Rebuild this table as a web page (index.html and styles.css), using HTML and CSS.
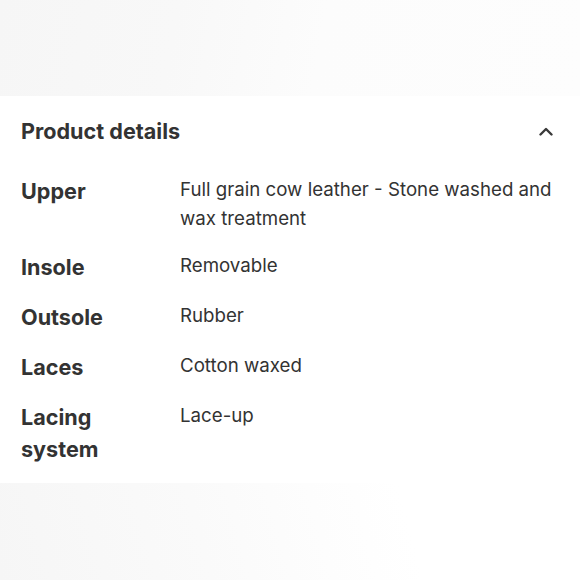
FILE: index.html
```html
<!DOCTYPE html>
<html lang="en">
<head>
<meta charset="utf-8">
<title>Product details</title>
<link rel="stylesheet" href="styles.css">
</head>
<body>
<div class="band band-top"></div>
<section class="card">
  <div class="header">
    <h2 class="title">Product details</h2>
    <svg class="chev" width="14" height="9" viewBox="0 0 14 9" aria-hidden="true"><path d="M1.5 7.5 L7 2 L12.5 7.5" fill="none" stroke="#3a3a3a" stroke-width="2.4" stroke-linecap="round" stroke-linejoin="round"/></svg>
  </div>
  <dl class="specs">
    <dt>Upper</dt><dd>Full grain cow leather - Stone washed and wax treatment</dd>
    <dt>Insole</dt><dd>Removable</dd>
    <dt>Outsole</dt><dd>Rubber</dd>
    <dt>Laces</dt><dd>Cotton waxed</dd>
    <dt>Lacing system</dt><dd>Lace-up</dd>
  </dl>
</section>
<div class="band band-bottom"></div>
</body>
</html>
```
FILE: styles.css
```css
html, body { margin: 0; padding: 0; }
body {
  width: 580px;
  height: 580px;
  overflow: hidden;
  background: #fff;
  font-family: Inter, "Liberation Sans", Arial, sans-serif;
  color: #333;
}
.band { width: 100%; }
.band-top {
  height: 96px;
  background: linear-gradient(100deg, #f6f6f6 0%, #f8f8f8 30%, #fcfcfc 55%, #fdfdfd 100%);
}
.band-bottom {
  height: 97px;
  background: linear-gradient(75deg, #f6f6f6 0%, #fafafa 35%, #fdfdfd 55%, #ffffff 70%);
}
.card {
  background: #fff;
  height: 387px;
  box-sizing: border-box;
  padding: 19px 27px 10px 21px;
}
.header {
  display: flex;
  align-items: center;
  justify-content: space-between;
  height: 32px;
}
.title {
  margin: 0;
  font-size: 21.6px;
  font-weight: 700;
  line-height: 32px;
  color: #333;
}
.specs {
  margin: 28px 0 0;
  display: grid;
  grid-template-columns: 159px 1fr;
  row-gap: 18px;
}
.specs dt {
  margin: 0;
  font-size: 21.6px;
  font-weight: 700;
  line-height: 32px;
  width: 110px;
}
.specs dd {
  margin: 0;
  font-size: 18.7px;
  line-height: 28.5px;
  padding-top: 1px;
  color: #333;
}
```
